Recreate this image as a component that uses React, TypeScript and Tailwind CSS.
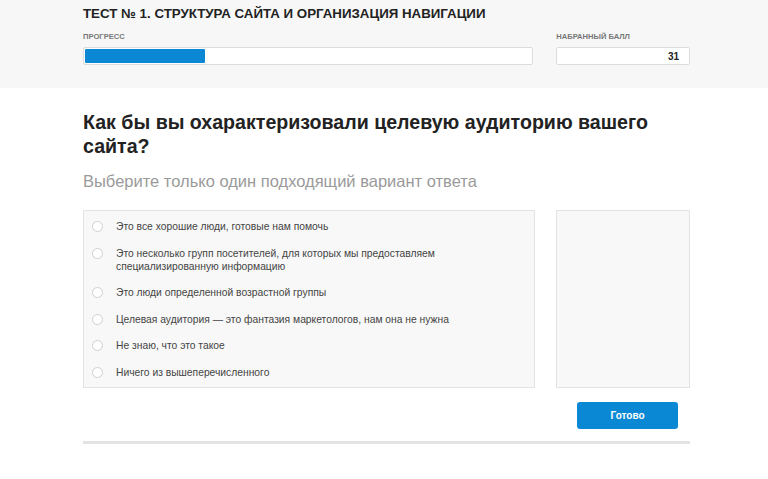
import React, { useState } from 'react'

const options = [
  'Это все хорошие люди, готовые нам помочь',
  'Это несколько групп посетителей, для которых мы предоставляем специализированную информацию',
  'Это люди определенной возрастной группы',
  'Целевая аудитория — это фантазия маркетологов, нам она не нужна',
  'Не знаю, что это такое',
  'Ничего из вышеперечисленного',
]

export default function App() {
  const [selected, setSelected] = useState<number | null>(null)

  return (
    <div className="min-h-[479px] bg-white font-['Liberation_Sans',Arial,sans-serif] text-[#222]">
      {/* шапка теста */}
      <div className="h-[88px] bg-[#f7f7f7]">
        <div className="ml-[83px] w-[607px] pt-[5px]">
          <h1 className="text-[13.3px] font-bold leading-[17px] uppercase text-[#222]">
            Тест № 1. Структура сайта и организация навигации
          </h1>
          <div className="mt-[10px] flex gap-[23px]">
            <div className="w-[451px]">
              <div className="text-[7.6px] font-bold leading-[10px] text-[#777] uppercase">Прогресс</div>
              <div className="mt-[5px] h-[18px] rounded-[2px] border border-[#dcdcdc] bg-white p-[1px]">
                <div className="h-full w-[120px] rounded-[1px] bg-[#0a88d4]" />
              </div>
            </div>
            <div className="w-[134px]">
              <div className="text-[7.6px] font-bold leading-[10px] text-[#777] uppercase">Набранный балл</div>
              <div className="mt-[5px] flex h-[18px] items-center justify-end rounded-[2px] border border-[#dcdcdc] bg-white pr-[10px] text-[10px] font-bold">
                31
              </div>
            </div>
          </div>
        </div>
      </div>

      {/* вопрос */}
      <div className="ml-[83px] w-[607px] pt-[22px]">
        <h2 className="w-[580px] text-[19.6px] font-bold leading-[24px] text-[#222]">
          Как бы вы охарактеризовали целевую аудиторию вашего сайта?
        </h2>
        <p className="mt-[12px] text-[16.5px] leading-[22px] text-[#9a9a9a]">
          Выберите только один подходящий вариант ответа
        </p>

        <div className="mt-[18px] flex gap-[21px]">
          <div className="flex h-[178px] w-[452px] flex-col gap-[13.5px] border border-[#e3e3e3] bg-[#f8f8f8] pt-[9px] pl-[8px] pr-[20px]">
            {options.map((opt, i) => (
              <label key={i} className="flex cursor-pointer items-start gap-[13px]" onClick={() => setSelected(i)}>
                <span className="mt-[1px] flex h-[11px] w-[11px] shrink-0 items-center justify-center rounded-full border border-[#cfcfcf] bg-white">
                  {selected === i && <span className="h-[5px] w-[5px] rounded-full bg-[#0a88d4]" />}
                </span>
                <span className="text-[10.3px] leading-[13px] text-[#444]">{opt}</span>
              </label>
            ))}
          </div>
          <div className="h-[178px] w-[134px] border border-[#e3e3e3] bg-[#f8f8f8]" />
        </div>

        <div className="mt-[14px] flex justify-end pr-[12px]">
          <button className="h-[27px] w-[101px] rounded-[3px] bg-[#0a88d4] text-[10px] font-bold text-white">
            Готово
          </button>
        </div>

        <div className="mt-[12px] h-[3px] bg-[#e3e3e3]" />
      </div>
    </div>
  )
}
